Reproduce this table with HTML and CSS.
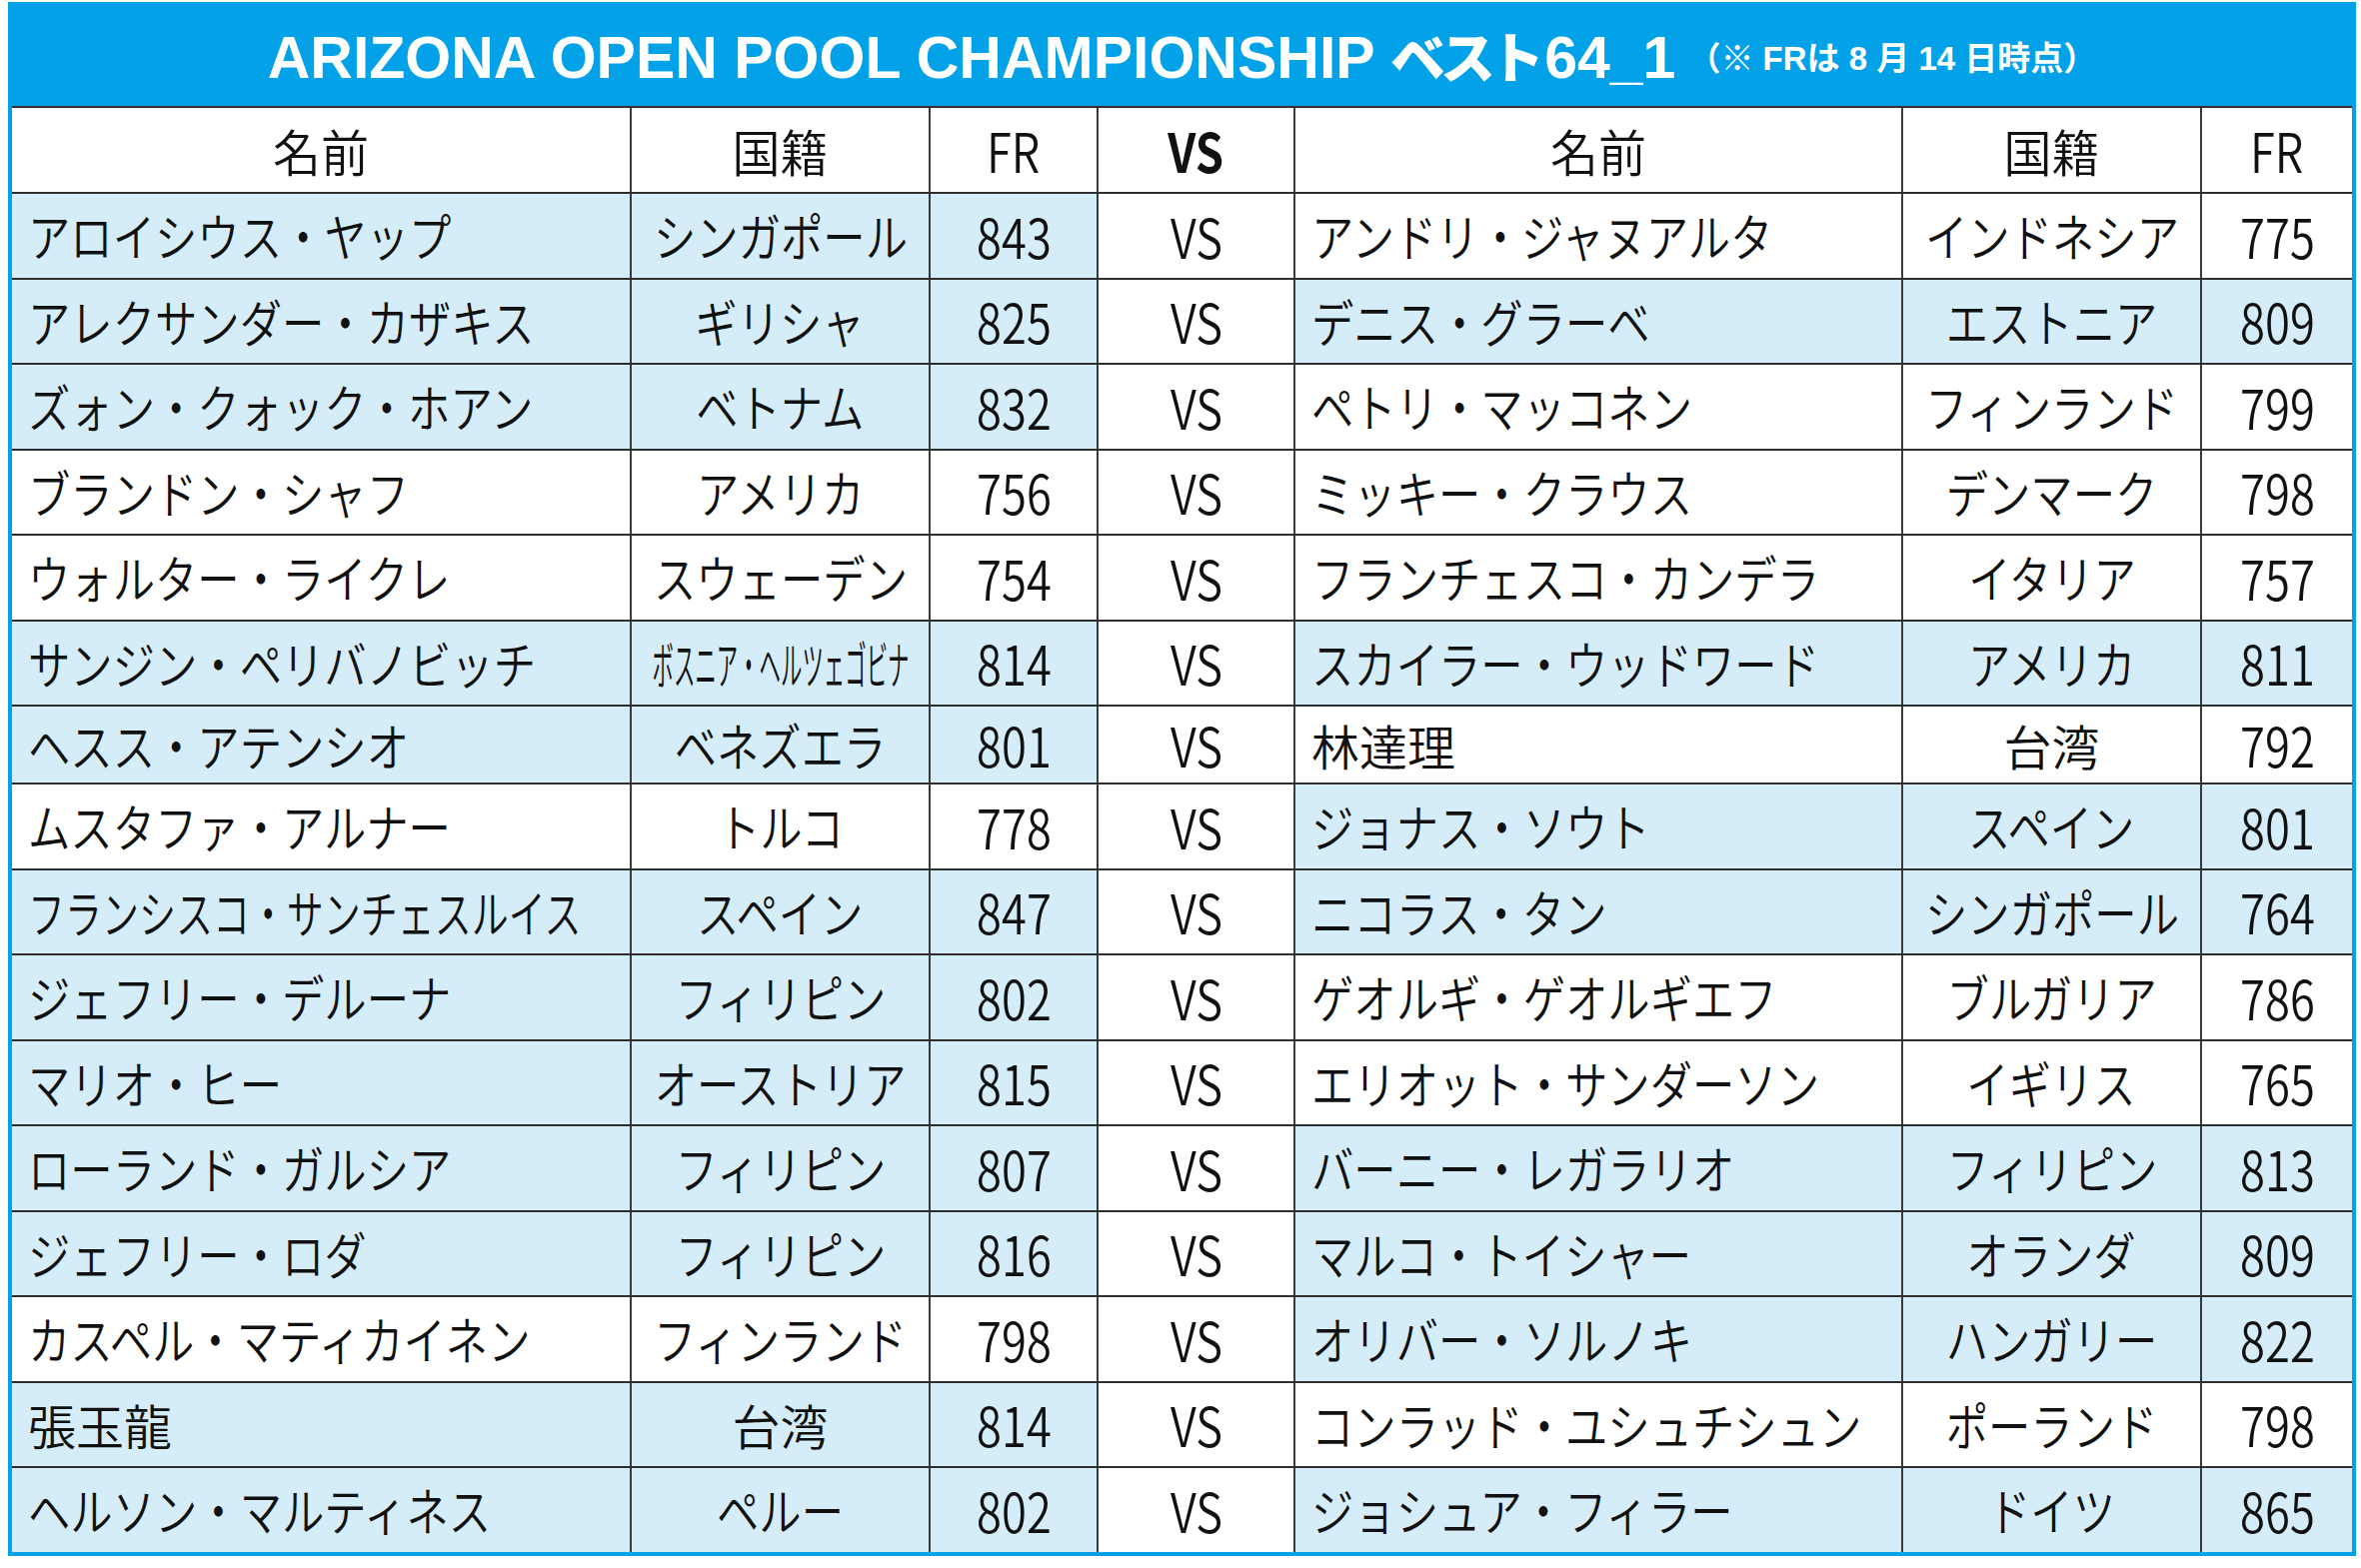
FILE: index.html
```html
<!DOCTYPE html>
<html lang="ja">
<head>
<meta charset="utf-8">
<title>ARIZONA OPEN POOL CHAMPIONSHIP ベスト64_1</title>
<link rel="stylesheet" href="styles.css">
</head>
<body>
<div class="frame">
  <div class="title">
    <span class="title-main">ARIZONA OPEN POOL CHAMPIONSHIP <span class="title-jp">ベスト</span>64_1</span>
    <span class="title-sub">（※ FRは 8 月 14 日時点）</span>
  </div>
  <div class="table">
    <div class="row head">
      <div class="c"><span class="h">名前</span></div><div class="c"><span class="h">国籍</span></div><div class="c n"><span>FR</span></div><div class="c n b"><span>VS</span></div><div class="c"><span class="h">名前</span></div><div class="c"><span class="h">国籍</span></div><div class="c n"><span>FR</span></div>
    </div>
    <div class="row">
      <div class="c l s"><span class="t">アロイシウス・ヤップ</span></div><div class="c s"><span class="t">シンガポール</span></div><div class="c n s"><span>843</span></div><div class="c n"><span>VS</span></div>
      <div class="c l"><span class="t">アンドリ・ジャヌアルタ</span></div><div class="c"><span class="t">インドネシア</span></div><div class="c n"><span>775</span></div>
    </div>
    <div class="row">
      <div class="c l s"><span class="t">アレクサンダー・カザキス</span></div><div class="c s"><span class="t">ギリシャ</span></div><div class="c n s"><span>825</span></div><div class="c n"><span>VS</span></div>
      <div class="c l s"><span class="t">デニス・グラーベ</span></div><div class="c s"><span class="t">エストニア</span></div><div class="c n s"><span>809</span></div>
    </div>
    <div class="row">
      <div class="c l s"><span class="t">ズォン・クォック・ホアン</span></div><div class="c s"><span class="t">ベトナム</span></div><div class="c n s"><span>832</span></div><div class="c n"><span>VS</span></div>
      <div class="c l"><span class="t">ペトリ・マッコネン</span></div><div class="c"><span class="t">フィンランド</span></div><div class="c n"><span>799</span></div>
    </div>
    <div class="row">
      <div class="c l"><span class="t">ブランドン・シャフ</span></div><div class="c"><span class="t">アメリカ</span></div><div class="c n"><span>756</span></div><div class="c n"><span>VS</span></div>
      <div class="c l"><span class="t">ミッキー・クラウス</span></div><div class="c"><span class="t">デンマーク</span></div><div class="c n"><span>798</span></div>
    </div>
    <div class="row">
      <div class="c l"><span class="t">ウォルター・ライクレ</span></div><div class="c"><span class="t">スウェーデン</span></div><div class="c n"><span>754</span></div><div class="c n"><span>VS</span></div>
      <div class="c l"><span class="t">フランチェスコ・カンデラ</span></div><div class="c"><span class="t">イタリア</span></div><div class="c n"><span>757</span></div>
    </div>
    <div class="row">
      <div class="c l s"><span class="t">サンジン・ペリバノビッチ</span></div><div class="c s"><span class="t xtight">ボスニア・ヘルツェゴビナ</span></div><div class="c n s"><span>814</span></div><div class="c n"><span>VS</span></div>
      <div class="c l s"><span class="t">スカイラー・ウッドワード</span></div><div class="c s"><span class="t">アメリカ</span></div><div class="c n s"><span>811</span></div>
    </div>
    <div class="row short">
      <div class="c l s"><span class="t">ヘスス・アテンシオ</span></div><div class="c s"><span class="t">ベネズエラ</span></div><div class="c n s"><span>801</span></div><div class="c n"><span>VS</span></div>
      <div class="c l"><span class="k">林達理</span></div><div class="c"><span class="k">台湾</span></div><div class="c n"><span>792</span></div>
    </div>
    <div class="row">
      <div class="c l"><span class="t">ムスタファ・アルナー</span></div><div class="c"><span class="t">トルコ</span></div><div class="c n"><span>778</span></div><div class="c n"><span>VS</span></div>
      <div class="c l s"><span class="t">ジョナス・ソウト</span></div><div class="c s"><span class="t">スペイン</span></div><div class="c n s"><span>801</span></div>
    </div>
    <div class="row">
      <div class="c l s"><span class="t tight">フランシスコ・サンチェスルイス</span></div><div class="c s"><span class="t">スペイン</span></div><div class="c n s"><span>847</span></div><div class="c n"><span>VS</span></div>
      <div class="c l s"><span class="t">ニコラス・タン</span></div><div class="c s"><span class="t">シンガポール</span></div><div class="c n s"><span>764</span></div>
    </div>
    <div class="row">
      <div class="c l s"><span class="t">ジェフリー・デルーナ</span></div><div class="c s"><span class="t">フィリピン</span></div><div class="c n s"><span>802</span></div><div class="c n"><span>VS</span></div>
      <div class="c l"><span class="t">ゲオルギ・ゲオルギエフ</span></div><div class="c"><span class="t">ブルガリア</span></div><div class="c n"><span>786</span></div>
    </div>
    <div class="row">
      <div class="c l s"><span class="t">マリオ・ヒー</span></div><div class="c s"><span class="t">オーストリア</span></div><div class="c n s"><span>815</span></div><div class="c n"><span>VS</span></div>
      <div class="c l"><span class="t">エリオット・サンダーソン</span></div><div class="c"><span class="t">イギリス</span></div><div class="c n"><span>765</span></div>
    </div>
    <div class="row">
      <div class="c l s"><span class="t">ローランド・ガルシア</span></div><div class="c s"><span class="t">フィリピン</span></div><div class="c n s"><span>807</span></div><div class="c n"><span>VS</span></div>
      <div class="c l s"><span class="t">バーニー・レガラリオ</span></div><div class="c s"><span class="t">フィリピン</span></div><div class="c n s"><span>813</span></div>
    </div>
    <div class="row">
      <div class="c l s"><span class="t">ジェフリー・ロダ</span></div><div class="c s"><span class="t">フィリピン</span></div><div class="c n s"><span>816</span></div><div class="c n"><span>VS</span></div>
      <div class="c l s"><span class="t">マルコ・トイシャー</span></div><div class="c s"><span class="t">オランダ</span></div><div class="c n s"><span>809</span></div>
    </div>
    <div class="row">
      <div class="c l"><span class="t">カスペル・マティカイネン</span></div><div class="c"><span class="t">フィンランド</span></div><div class="c n"><span>798</span></div><div class="c n"><span>VS</span></div>
      <div class="c l s"><span class="t">オリバー・ソルノキ</span></div><div class="c s"><span class="t">ハンガリー</span></div><div class="c n s"><span>822</span></div>
    </div>
    <div class="row">
      <div class="c l s"><span class="k">張玉龍</span></div><div class="c s"><span class="k">台湾</span></div><div class="c n s"><span>814</span></div><div class="c n"><span>VS</span></div>
      <div class="c l"><span class="t">コンラッド・ユシュチシュン</span></div><div class="c"><span class="t">ポーランド</span></div><div class="c n"><span>798</span></div>
    </div>
    <div class="row">
      <div class="c l s"><span class="t">ヘルソン・マルティネス</span></div><div class="c s"><span class="t">ペルー</span></div><div class="c n s"><span>802</span></div><div class="c n"><span>VS</span></div>
      <div class="c l s"><span class="t">ジョシュア・フィラー</span></div><div class="c s"><span class="t">ドイツ</span></div><div class="c n s"><span>865</span></div>
    </div>
  </div>
</div>
</body>
</html>
```
FILE: styles.css
```css
html, body {
  margin: 0;
  background: #ffffff;
}

body {
  font-family: "Noto Sans CJK JP", "Noto Sans", sans-serif;
  color: #111111;
}

.frame {
  margin: 2px 0 0 8px;
  width: 2349px;
  background: #02a1e8;
  padding: 0 4px 4px;
  box-sizing: border-box;
}

.title {
  height: 104px;
  display: flex;
  align-items: center;
  justify-content: center;
  color: #ffffff;
  font-weight: 700;
}

.title-main {
  font-family: "Liberation Sans", "Noto Sans CJK JP", sans-serif;
  font-size: 59px;
  white-space: nowrap;
}

.title-jp {
  font-family: "Noto Sans CJK JP", sans-serif;
  font-size: 55px;
  font-weight: 900;
  letter-spacing: -6px;
  margin-right: 6px;
}

.title-sub {
  font-family: "Liberation Sans", "Noto Sans CJK JP", sans-serif;
  font-size: 33px;
  margin-left: 12px;
  margin-top: 4px;
  white-space: nowrap;
}

.table {
  background: #ffffff;
}

.row {
  display: grid;
  grid-template-columns: 618px 299px 168px 197px 608px 299px 152px;
  grid-template-rows: minmax(0, 1fr);
  height: 85.5px;
  border-top: 2px solid #2e2e2e;
  box-sizing: border-box;
}

.row.head {
  height: 86px;
}

.row.short {
  height: 78px;
}

.c {
  display: flex;
  align-items: center;
  justify-content: center;
  border-left: 2px solid #3a3a3a;
  white-space: nowrap;
  font-size: 48px;
  font-weight: 350;
  line-height: 1;
  min-width: 0;
  min-height: 0;
}

.c:first-child {
  border-left: none;
}

.c.l {
  justify-content: flex-start;
  padding-left: 16px;
}

.s {
  background: #d5ecf9;
}

.n {
  font-size: 54px;
}

.n span {
  display: inline-block;
  transform: scaleX(0.84);
}

.b {
  font-weight: 700;
}

.h {
  display: inline-block;
  transform: scaleY(1.04);
}

.t {
  display: inline-block;
  font-size: 51px;
  transform: scaleX(0.83);
}

.c.l .t {
  transform-origin: left center;
}

.t.tight {
  transform: scaleX(0.725);
}

.t.xtight {
  transform: scaleX(0.42);
}

.k {
  display: inline-block;
}
```
